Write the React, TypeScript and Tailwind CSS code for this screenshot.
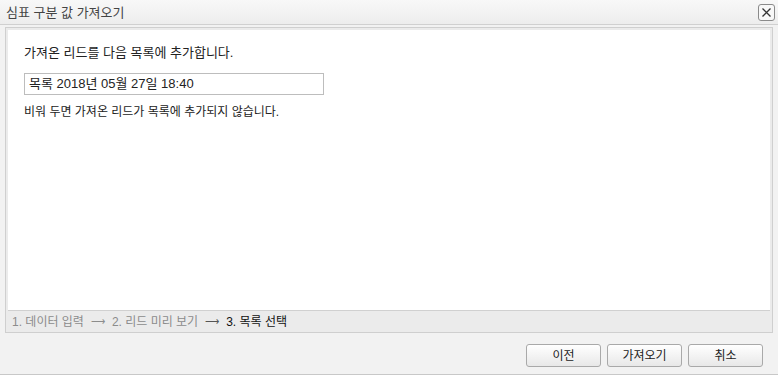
import React from "react";

const font = { fontFamily: '"Liberation Sans", "Noto Sans CJK KR", sans-serif' };

function Btn({ children }: { children: React.ReactNode }) {
  return (
    <button className="w-[75px] h-[23px] rounded-[3px] border border-[#a9a9a9] bg-gradient-to-b from-[#ffffff] to-[#e8e8e8] text-[12px] text-[#222] leading-none">
      {children}
    </button>
  );
}

export default function App() {
  return (
    <div style={font} className="w-[778px] h-[375px] bg-[#f2f2f2] flex flex-col border-b border-[#c8c8c8] overflow-hidden">
      <div className="h-[25px] shrink-0 flex items-center justify-between pl-[6px] pr-[3px] bg-gradient-to-b from-[#f8f8f8] to-[#ededed] border-b border-[#d0d0d0]">
        <span className="text-[13px] text-[#444] leading-none mt-[1px]">심표 구분 값 가져오기</span>
        <div className="w-[17px] h-[17px] rounded-[3px] border border-[#8a8a8a] bg-[#f8f8f8] flex items-center justify-center">
          <svg width="11" height="11" viewBox="0 0 11 11">
            <path d="M1.5 1.5 L9.5 9.5 M9.5 1.5 L1.5 9.5" stroke="#333" strokeWidth="1.3" />
          </svg>
        </div>
      </div>
      <div className="mx-[5px] mt-[2px] h-[306px] border border-[#cfcfcf] bg-[#ebebeb] p-[2px] pb-0 flex flex-col">
        <div className="flex-1 bg-white border-b border-[#d0d0d0] pl-[16px] pt-[15px]">
          <div className="text-[13px] text-[#222] leading-[16px]">가져온 리드를 다음 목록에 추가합니다.</div>
          <div className="mt-[12px] w-[300px] h-[22px] border border-[#bdbdbd] flex items-center pl-[4px] text-[13px] text-[#222]">
            목록 2018년 05월 27일 18:40
          </div>
          <div className="mt-[10px] text-[12px] text-[#222] leading-[14px]">
            비워 두면 가져온 리드가 목록에 추가되지 않습니다.
          </div>
        </div>
        <div className="h-[21px] flex items-center pl-[4px] text-[12px] leading-none">
          <span className="text-[#8c8c8c]">1. 데이터 입력</span>
          <span className="text-[#8c8c8c] mx-[7px] text-[10px]">⟶</span>
          <span className="text-[#8c8c8c]">2. 리드 미리 보기</span>
          <span className="text-[#555] mx-[7px] text-[10px]">⟶</span>
          <span className="text-[#111]">3. 목록 선택</span>
        </div>
      </div>
      <div className="flex justify-end gap-[6px] pr-[15px] mt-[11px]">
        <Btn>이전</Btn>
        <Btn>가져오기</Btn>
        <Btn>취소</Btn>
      </div>
    </div>
  );
}
